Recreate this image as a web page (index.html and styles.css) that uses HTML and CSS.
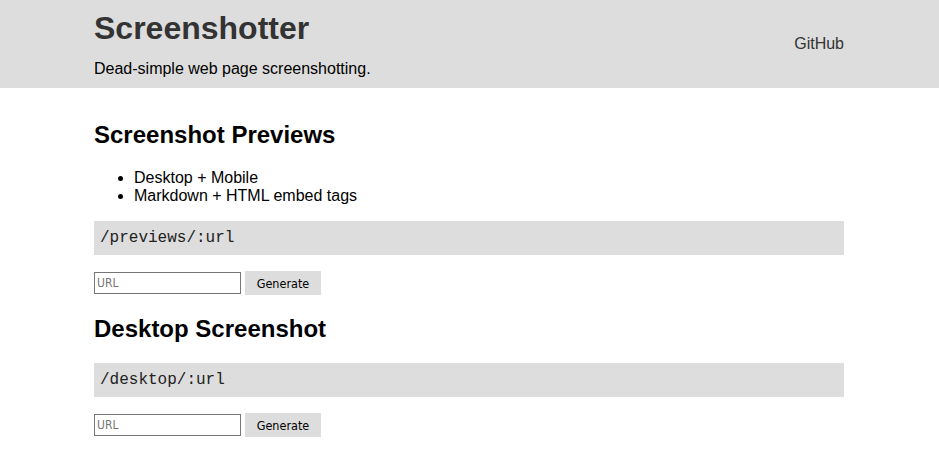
FILE: index.html
```html
<!DOCTYPE html>
<html>
<head>
<meta charset="utf-8">
<title>Screenshotter</title>
<link rel="stylesheet" href="styles.css">
</head>
<body>
<header class="site-header">
  <div class="container header-inner">
    <div class="brand">
      <h1 class="title">Screenshotter</h1>
      <p class="tagline">Dead-simple web page screenshotting.</p>
    </div>
    <a class="github" href="#">GitHub</a>
  </div>
</header>
<main class="container main">
  <section class="section">
    <h2 class="section-title">Screenshot Previews</h2>
    <ul class="features">
      <li>Desktop + Mobile</li>
      <li>Markdown + HTML embed tags</li>
    </ul>
    <pre class="endpoint">/previews/:url</pre>
    <form class="gen-form">
      <input class="url-input" type="text" placeholder="URL"> <button class="gen-btn" type="button">Generate</button>
    </form>
  </section>
  <section class="section">
    <h2 class="section-title">Desktop Screenshot</h2>
    <pre class="endpoint">/desktop/:url</pre>
    <form class="gen-form">
      <input class="url-input" type="text" placeholder="URL"> <button class="gen-btn" type="button">Generate</button>
    </form>
  </section>
</main>
</body>
</html>
```

FILE: styles.css
```css
html, body {
  margin: 0;
  padding: 0;
  background: #fff;
}
body {
  font-family: "Liberation Sans", Arial, sans-serif;
  font-size: 16px;
  color: #000;
}
.container {
  width: 750px;
  margin-left: calc(50% - 375.5px);
  margin-right: auto;
}
.site-header {
  background: #ddd;
  padding: 10px 0;
}
.header-inner {
  display: flex;
  justify-content: space-between;
  align-items: center;
}
.title {
  margin: 0 0 13px;
  font-size: 32px;
  font-weight: bold;
  color: #333;
}
.tagline {
  margin: 0;
  font-size: 16px;
}
.github {
  color: #333;
  text-decoration: none;
  font-size: 16px;
}
.main {
  padding-top: 13px;
}
.section-title {
  font-size: 24px;
  font-weight: bold;
  margin: 20px 0;
}
.features {
  margin: 16px 0;
  padding-left: 40px;
}
.endpoint {
  background: #ddd;
  margin: 16px 0;
  padding: 8px 6px;
  font-family: "Liberation Mono", "Courier New", monospace;
  font-size: 16px;
  color: #222;
}
.gen-form {
  margin: 0;
  height: 24px;
  display: flex;
  align-items: center;
  gap: 4px;
}
.url-input {
  box-sizing: border-box;
  width: 147px;
  height: 22px;
  margin: 0;
  padding: 1px 2px;
  border: 1px solid #767676;
  font-family: "DejaVu Sans Condensed", "DejaVu Sans", sans-serif;
  font-stretch: condensed;
  font-size: 12px;
}
.url-input::placeholder {
  color: #757575;
}
.gen-btn {
  box-sizing: border-box;
  width: 76px;
  height: 24px;
  margin: 0;
  padding: 0;
  border: none;
  background: #ddd;
  color: #000;
  font-family: "DejaVu Sans Condensed", "DejaVu Sans", sans-serif;
  font-stretch: condensed;
  font-size: 12.5px;
}
```
